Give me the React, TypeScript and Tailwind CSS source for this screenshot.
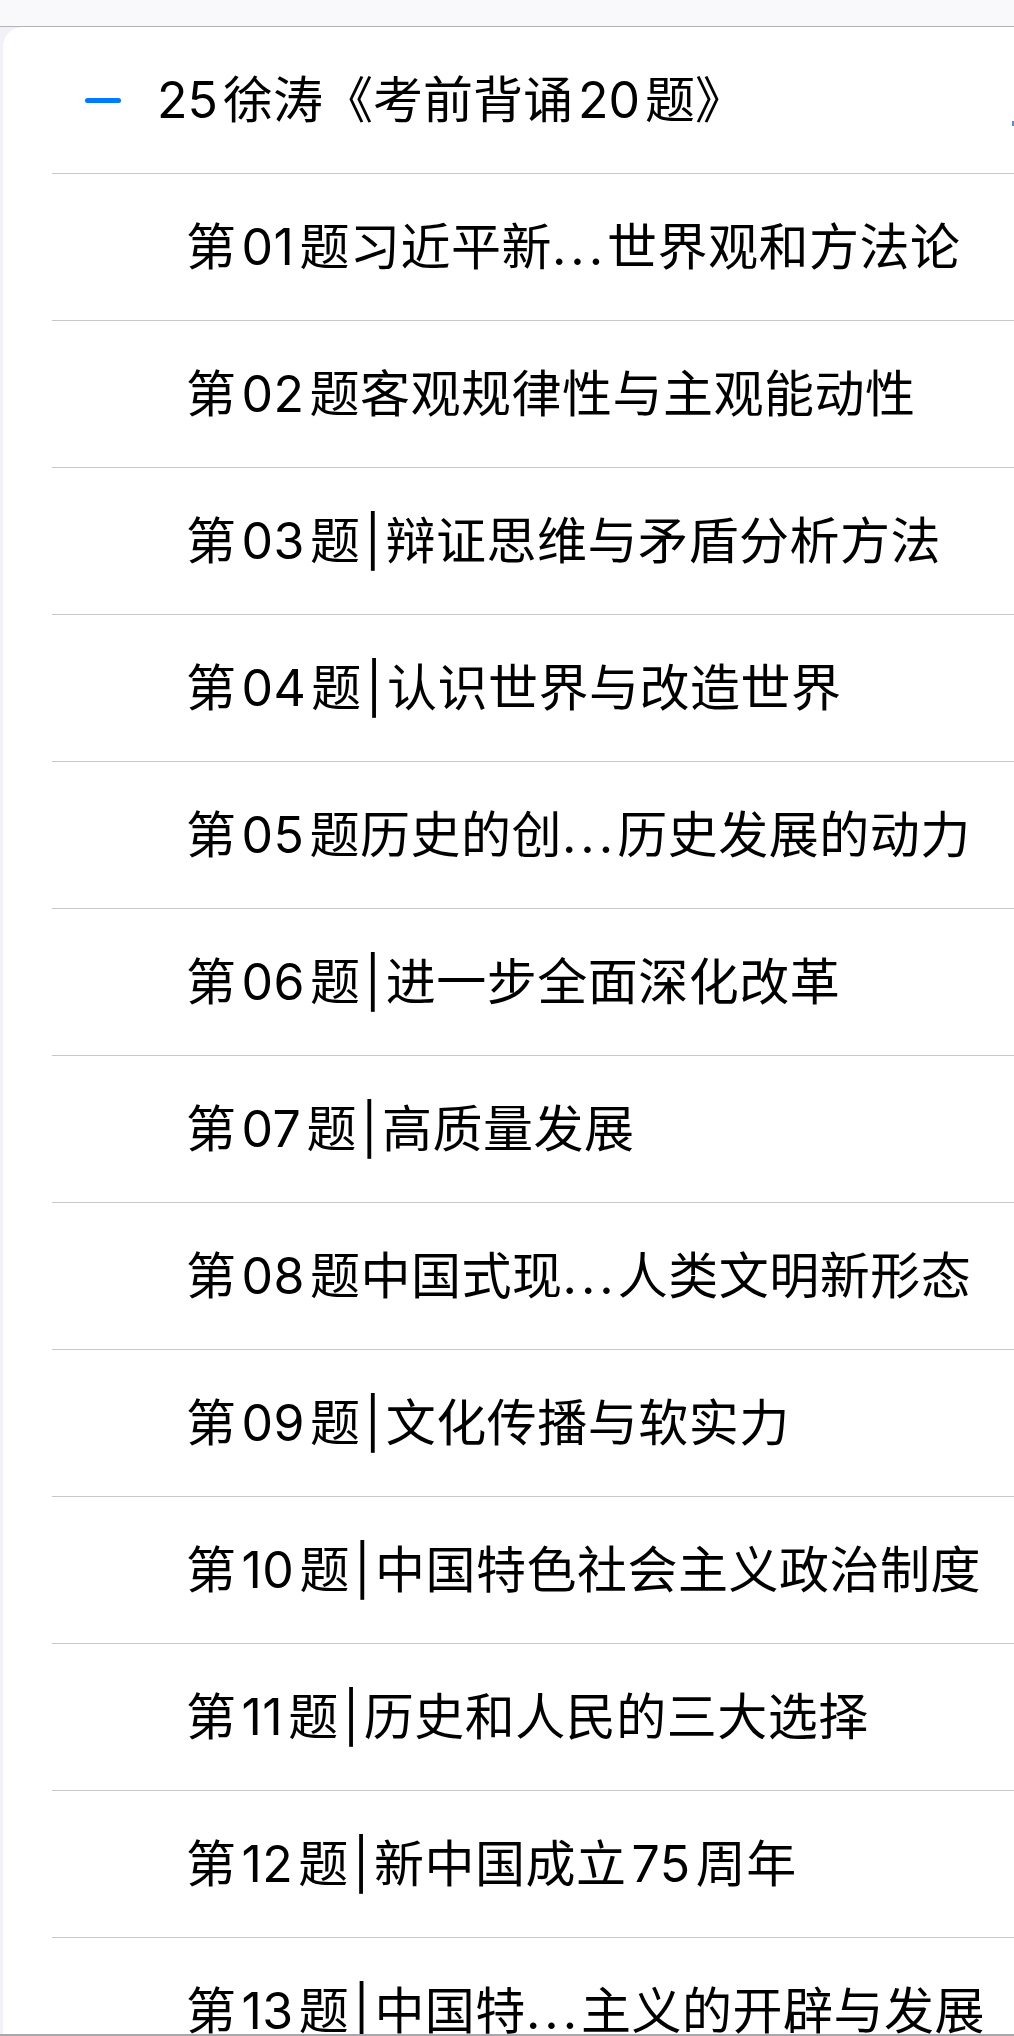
const items = [
  "第01题习近平新...世界观和方法论",
  "第02题客观规律性与主观能动性",
  "第03题|辩证思维与矛盾分析方法",
  "第04题|认识世界与改造世界",
  "第05题历史的创...历史发展的动力",
  "第06题|进一步全面深化改革",
  "第07题|高质量发展",
  "第08题中国式现...人类文明新形态",
  "第09题|文化传播与软实力",
  "第10题|中国特色社会主义政治制度",
  "第11题|历史和人民的三大选择",
  "第12题|新中国成立75周年",
  "第13题|中国特...主义的开辟与发展",
];

function Spaced({ text }: { text: string }) {
  const parts = text.split(/(\d+|\||\.\.\.)/).filter(Boolean);
  return (
    <>
      {parts.map((p, i) => {
        if (/^\d+$/.test(p))
          return (
            <span key={i} className="mx-[5px]">
              {p}
            </span>
          );
        if (p === "|")
          return (
            <span key={i} className="mx-[4px]">
              {p}
            </span>
          );
        if (p === "...")
          return (
            <span key={i} className="tracking-[4px]">
              {p}
            </span>
          );
        return <span key={i}>{p}</span>;
      })}
    </>
  );
}

export default function App() {
  return (
    <div
      className="h-[2036px] w-full overflow-hidden bg-[#f2f1f8] text-black"
      style={{ fontFamily: 'Inter, "Noto Sans CJK SC", sans-serif' }}
    >
      <div className="h-[27px] border-b border-[#b4b4b8] bg-[#f9f9fb]" />

      <div className="ml-[3px] h-[2007px] overflow-hidden rounded-tl-[20px] bg-white">
        <div className="relative flex h-[146px] items-center pl-[82px]">
          <span className="h-[5px] w-[36px] rounded-full bg-[#007aff]" />
          <span className="pl-[31px] whitespace-nowrap text-[50px] leading-none">
            <Spaced text="25徐涛《考前背诵20题》" />
          </span>
          <span className="absolute right-0 top-[94px] h-[5px] w-[2px] bg-[#4a90e2]" />
        </div>

        <div className="ml-[49px]">
          {items.map((t) => (
            <div
              key={t}
              className="flex h-[147px] items-center border-t border-[#c8c8cc] pl-[134px]"
            >
              <span className="whitespace-nowrap text-[50px] leading-none tracking-[0.5px]">
                <Spaced text={t} />
              </span>
            </div>
          ))}
        </div>
      </div>

      <div className="h-[2px] bg-[#a8a8ac]" />
    </div>
  );
}
